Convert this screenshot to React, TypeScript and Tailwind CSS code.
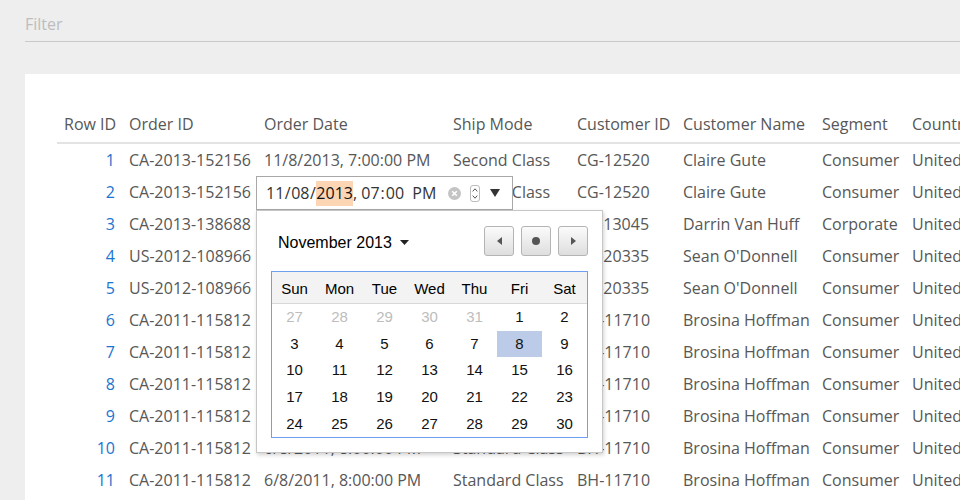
import React from "react";

const widths = [65, 135, 189, 124, 106, 139, 90, 150];
const headers = ["Row ID", "Order ID", "Order Date", "Ship Mode", "Customer ID", "Customer Name", "Segment", "Country"];

const rows: string[][] = [
  ["1", "CA-2013-152156", "11/8/2013, 7:00:00 PM", "Second Class", "CG-12520", "Claire Gute", "Consumer", "United States"],
  ["2", "CA-2013-152156", "11/8/2013, 7:00:00 PM", "Second Class", "CG-12520", "Claire Gute", "Consumer", "United States"],
  ["3", "CA-2013-138688", "6/12/2013, 7:00:00 PM", "Second Class", "DV-13045", "Darrin Van Huff", "Corporate", "United States"],
  ["4", "US-2012-108966", "10/11/2012, 8:00:00 PM", "Standard Class", "SO-20335", "Sean O'Donnell", "Consumer", "United States"],
  ["5", "US-2012-108966", "10/11/2012, 8:00:00 PM", "Standard Class", "SO-20335", "Sean O'Donnell", "Consumer", "United States"],
  ["6", "CA-2011-115812", "6/8/2011, 8:00:00 PM", "Standard Class", "BH-11710", "Brosina Hoffman", "Consumer", "United States"],
  ["7", "CA-2011-115812", "6/8/2011, 8:00:00 PM", "Standard Class", "BH-11710", "Brosina Hoffman", "Consumer", "United States"],
  ["8", "CA-2011-115812", "6/8/2011, 8:00:00 PM", "Standard Class", "BH-11710", "Brosina Hoffman", "Consumer", "United States"],
  ["9", "CA-2011-115812", "6/8/2011, 8:00:00 PM", "Standard Class", "BH-11710", "Brosina Hoffman", "Consumer", "United States"],
  ["10", "CA-2011-115812", "6/8/2011, 8:00:00 PM", "Standard Class", "BH-11710", "Brosina Hoffman", "Consumer", "United States"],
  ["11", "CA-2011-115812", "6/8/2011, 8:00:00 PM", "Standard Class", "BH-11710", "Brosina Hoffman", "Consumer", "United States"],
];

const days = ["Sun", "Mon", "Tue", "Wed", "Thu", "Fri", "Sat"];
const weeks = [
  [27, 28, 29, 30, 31, 1, 2],
  [3, 4, 5, 6, 7, 8, 9],
  [10, 11, 12, 13, 14, 15, 16],
  [17, 18, 19, 20, 21, 22, 23],
  [24, 25, 26, 27, 28, 29, 30],
];

const NavButton = ({ children }: { children: React.ReactNode }) => (
  <div className="flex h-[30px] w-[30px] items-center justify-center rounded-[3px] border border-[#b4b4b4] bg-gradient-to-b from-[#fbfbfb] to-[#dedede]">
    {children}
  </div>
);

const DatePopup = () => (
  <div className="absolute left-[-1px] top-[34px] z-20 h-[243px] w-[347px] border border-[#c6c6c6] bg-white px-[14px] pt-[15px] shadow-[1px_2px_4px_rgba(0,0,0,0.18)] font-['Liberation_Sans',Arial,sans-serif] text-black">
    {/* Month + nav */}
    <div className="flex h-[30px] items-center">
      <div className="flex items-center pl-[7px] pt-[3px] text-[16px]">
        November 2013
        <svg width="9" height="5" viewBox="0 0 9 5" className="ml-[8px]">
          <path d="M0 0 L9 0 L4.5 5 Z" fill="#222" />
        </svg>
      </div>
      <div className="ml-auto flex gap-[7px]">
        <NavButton>
          <svg width="5" height="8" viewBox="0 0 5 8">
            <path d="M5 0 L0 4 L5 8 Z" fill="#555" />
          </svg>
        </NavButton>
        <NavButton>
          <div className="h-[8px] w-[8px] rounded-full bg-[#555]" />
        </NavButton>
        <NavButton>
          <svg width="5" height="8" viewBox="0 0 5 8">
            <path d="M0 0 L5 4 L0 8 Z" fill="#555" />
          </svg>
        </NavButton>
      </div>
    </div>

    {/* Grid */}
    <div className="mt-[15px] border border-[#6e9ff0]">
      <div className="flex h-[32px] items-center border-b border-[#d8d8d8] bg-[#f3f3f3] pt-[2px] text-[15px]">
        {days.map((d) => (
          <div key={d} className="flex-1 text-center">
            {d}
          </div>
        ))}
      </div>
      {weeks.map((w, wi) => (
        <div key={wi} className="flex h-[26.6px] items-center text-[15px]">
          {w.map((d, di) => {
            const muted = wi === 0 && d > 20;
            const selected = wi === 1 && d === 8;
            return (
              <div
                key={di}
                className={
                  "flex h-full flex-1 items-center justify-center " +
                  (muted ? "text-[#bdbdbd] " : "text-[#111] ") +
                  (selected ? "bg-[#bccbe8]" : "")
                }
              >
                {d}
              </div>
            );
          })}
        </div>
      ))}
    </div>
  </div>
);

const DateEditor = () => (
  <div className="absolute left-[-1px] top-0 z-10 flex h-[34px] w-[257px] items-center border border-[#a8a8a8] bg-white pl-[9px] pr-[12px] text-[16px] text-[#333]">
    <span>11</span>
    <span className="px-[0.5px]">/</span>
    <span>08</span>
    <span className="px-[0.5px]">/</span>
    <span className="bg-[#fcd5b4] leading-[25px] text-[#111]">2013</span>
    <span>,&nbsp;</span>
    <span>07</span>
    <span className="px-[1px]">:</span>
    <span>00</span>
    <span>&nbsp;&nbsp;PM</span>
    <div className="ml-auto flex items-center">
      <svg width="13" height="13" viewBox="0 0 13 13">
        <circle cx="6.5" cy="6.5" r="6.5" fill="#c4c4c4" />
        <path d="M4.2 4.2 L8.8 8.8 M8.8 4.2 L4.2 8.8" stroke="#fff" strokeWidth="1.6" />
      </svg>
      <div className="ml-[9px] flex h-[17px] w-[10px] flex-col items-center justify-center gap-[3px] rounded-[3px] border border-[#bcbcbc]">
        <svg width="6" height="4" viewBox="0 0 6 4">
          <path d="M0.7 3.4 L3 0.8 L5.3 3.4" stroke="#555" fill="none" strokeWidth="1" />
        </svg>
        <svg width="6" height="4" viewBox="0 0 6 4">
          <path d="M0.7 0.6 L3 3.2 L5.3 0.6" stroke="#555" fill="none" strokeWidth="1" />
        </svg>
      </div>
      <svg width="10" height="8" viewBox="0 0 10 8" className="ml-[10px]">
        <path d="M0 0 L10 0 L5 8 Z" fill="#333" />
      </svg>
    </div>
  </div>
);

export default function App() {
  return (
    <div className="h-[500px] w-[960px] overflow-hidden bg-[#eeeeee] font-['Open_Sans',sans-serif]">
      {/* Filter */}
      <div className="ml-[25px] border-b border-[#c9c9c9] pb-[5px] pt-3">
        <div className="h-6 text-[16px] leading-6 text-[#bdbdbd]">Filter</div>
      </div>

      {/* Table panel */}
      <div className="ml-[25px] mt-[32px] h-[500px] w-[1100px] bg-white pl-[32px] pt-[31px]">
        <div className="w-[1010px] text-[16px] text-[#575757]">
          <div className="flex h-[39px] items-center border-b-2 border-[#e3e3e3]">
            {headers.map((h, i) => (
              <div
                key={h}
                style={{ width: widths[i] }}
                className={"shrink-0 whitespace-nowrap px-[7px] " + (i === 0 ? "text-right" : "")}
              >
                {h}
              </div>
            ))}
          </div>
          {rows.map((r, ri) => (
            <div key={ri} className="flex h-8 items-center leading-8">
              {r.map((c, ci) => (
                <div
                  key={ci}
                  style={{ width: widths[ci] }}
                  className={
                    "relative h-8 shrink-0 whitespace-nowrap px-[7px] " +
                    (ci === 0 ? "text-right text-[#1b74cf]" : "")
                  }
                >
                  {ri === 1 && ci === 2 ? (
                    <>
                      <DateEditor />
                      <DatePopup />
                    </>
                  ) : (
                    c
                  )}
                </div>
              ))}
            </div>
          ))}
        </div>
      </div>
    </div>
  );
}
